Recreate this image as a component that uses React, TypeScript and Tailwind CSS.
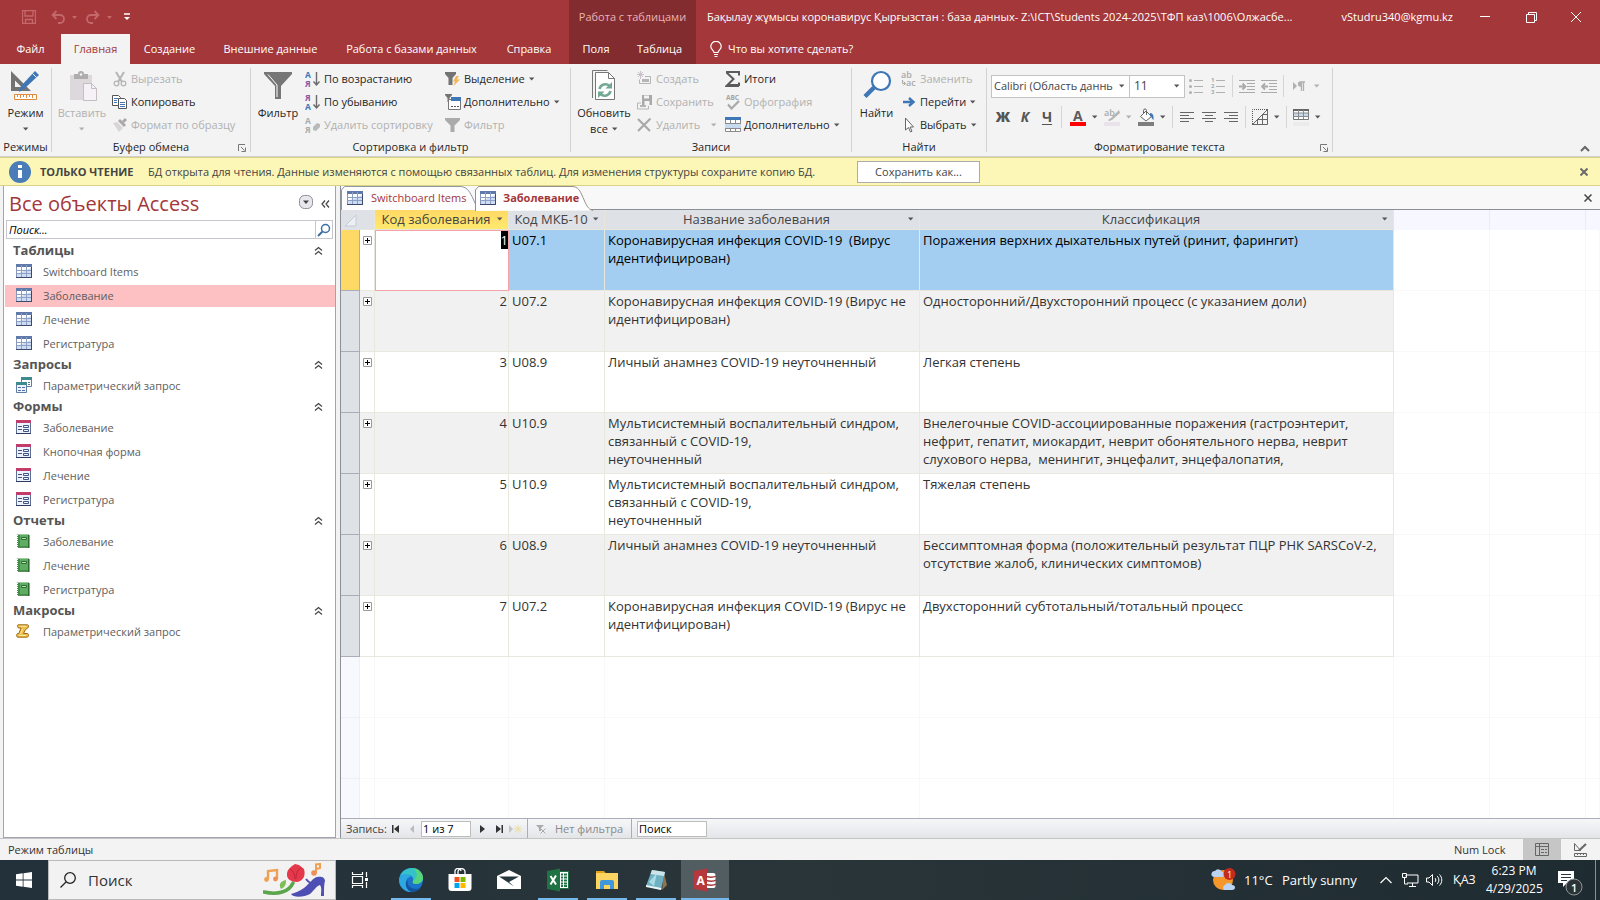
import type { ReactNode } from "react";

const GRAY = "#737373";
const LIGHT = "#b5b5b5";
const BLUE = "#3f76b5";

/* ---------- small shared pieces ---------- */

function Caret({ dim = false }: { dim?: boolean }) {
  return (
    <svg width="6" height="4" viewBox="0 0 6 4" className="shrink-0">
      <path d="M0 0.500h5.400L2.700 3.400z" fill={dim ? "#b0b0b0" : "#555"} />
    </svg>
  );
}

function Icon({ children, w = 16, h = 16 }: { children: ReactNode; w?: number; h?: number }) {
  return (
    <svg width={w} height={h} viewBox={`0 0 ${w} ${h}`} fill="none" className="shrink-0">
      {children}
    </svg>
  );
}

function SmallButton({ icon, text, disabled = false, caret = false, farCaret = false }: { icon: ReactNode; text: string; disabled?: boolean; caret?: boolean; farCaret?: boolean }) {
  return (
    <button disabled={disabled} className={`flex h-[23px] items-center gap-[3px] whitespace-nowrap ${disabled ? "text-[#b1b1b1]" : "text-[#262626]"}`}>
      {icon}
      <span>{text}</span>
      {caret && <span className={farCaret ? "pl-2" : "pl-px"}><Caret dim={disabled} /></span>}
    </button>
  );
}

function BigButton({ icon, lines, width, caret = "none", disabled = false }: { icon: ReactNode; lines: string[]; width: string; caret?: "none" | "below" | "inline"; disabled?: boolean }) {
  return (
    <button disabled={disabled} className={`flex flex-col items-center pt-[3px] leading-4 ${width} ${disabled ? "text-[#b1b1b1]" : "text-[#262626]"}`}>
      {icon}
      {lines.map((l, i) => (
        <span key={l} className={`flex items-center gap-1 whitespace-nowrap ${i === 0 ? "mt-[3px]" : ""}`}>
          {l}
          {caret === "inline" && i === lines.length - 1 && <Caret />}
        </span>
      ))}
      {caret === "below" && <span className="flex h-4 items-center"><Caret dim={disabled} /></span>}
    </button>
  );
}

function Launcher() {
  return (
    <Icon w={8} h={8}>
      <path d="M0.500 7V0.500H7M3 3l3.500 3.500M7.500 3.500v4h-4" stroke="#777" />
    </Icon>
  );
}

function Group({ label, width, launcher = false, children }: { label: string; width: string; launcher?: boolean; children: ReactNode }) {
  return (
    <>
      <section aria-label={label} className={`flex shrink-0 flex-col pt-[3px] ${width}`}>
        <div className="flex h-[69px] items-start">{children}</div>
        <div className="flex h-5 items-center text-[#262626]">
          <span className="flex-1 pt-0.5 text-center whitespace-nowrap">{label}</span>
          {launcher && <button aria-label={`${label}: параметры`} className="-ml-3 pt-1 pr-1"><Launcher /></button>}
        </div>
      </section>
      <div className="my-1 w-px shrink-0 bg-[#d2d2d2]" />
    </>
  );
}

/* ---------- ribbon icons ---------- */

const DesignIcon = () => (
  <Icon w={32} h={32}>
    <path d="M1 1v20h20L1 1zm4 9.500L11.500 17H5z" fill={GRAY} fillRule="evenodd" />
    <path d="M9 22l2-6L25 1l4 4-15 14z" fill={BLUE} />
    <path d="M22.500 3.500l4 4" stroke="#f3f3f3" />
    <path d="M4.500 24.500h22v5h-22z" fill="#fff" stroke="#e08a3c" />
    <path d="M7.500 25v2M10.500 25v3M13.500 25v2M16.500 25v3M19.500 25v2M22.500 25v3" stroke="#e08a3c" />
  </Icon>
);

const PasteIcon = () => (
  <Icon w={32} h={32}>
    <path d="M4 5h22v25H4z" fill="#dcd8dc" />
    <path d="M8 4h4a3 3 0 0 1 6 0h4v5H8z" fill="#adadad" />
    <circle cx="15" cy="4.500" r="1.300" fill="#f3f3f3" />
    <path d="M17.500 13.500h8l5 5v12h-13z" fill="#f6f1f6" stroke="#c4bdc4" />
    <path d="M25.500 13.500v5h5" stroke="#c4bdc4" />
  </Icon>
);

const CutIcon = () => (
  <Icon>
    <path d="M4 1l6 10M12 1L6 11" stroke={LIGHT} strokeWidth="2" />
    <circle cx="4.500" cy="12.500" r="2.300" stroke={LIGHT} strokeWidth="1.300" />
    <circle cx="11.500" cy="12.500" r="2.300" stroke={LIGHT} strokeWidth="1.300" />
  </Icon>
);

const CopyIcon = () => (
  <Icon>
    <path d="M0.500 1.500h6l2 2v8h-8z" fill="#fff" stroke="#555" />
    <path d="M2 4.500h4M2 6.500h3M2 8.500h3" stroke={BLUE} />
    <path d="M6.500 4.500h6l2 2v8h-8z" fill="#fff" stroke="#555" />
    <path d="M8 8.500h5M8 10.500h5M8 12.500h5" stroke={BLUE} />
  </Icon>
);

const BrushIcon = () => (
  <Icon>
    <path d="M1 6l4-1 6 6-4 4z" fill="#d8d4d8" />
    <path d="M6 4l2-2 6 6-2 2z" fill="#a8a8a8" />
    <path d="M10 4l3-3 2 2-3 3z" fill="#a8a8a8" />
  </Icon>
);

const FunnelBig = () => (
  <Icon w={32} h={32}>
    <path d="M2 2h28v2L19 16v13h-6V16L2 4z" fill="#767676" />
    <path d="M6 4.500l9 10.500v12" stroke="#fff" />
  </Icon>
);

function SortIcon({ a, b, ca, cb, muted = false }: { a: string; b: string; ca: string; cb: string; muted?: boolean }) {
  return (
    <Icon>
      <text x="0" y="7" fontSize="8.500" fontWeight="700" fontFamily="Open Sans, sans-serif" fill={ca}>{a}</text>
      <text x="0" y="15.500" fontSize="8.500" fontWeight="700" fontFamily="Open Sans, sans-serif" fill={cb}>{b}</text>
      {muted ? (
        <path d="M8 10l4-4 3 1v3l-4 4-3-1z" fill="#b9b9b9" />
      ) : (
        <path d="M11.500 1v13M8.500 10.500l3 3.500 3-3.500" stroke="#6a6a6a" strokeWidth="1.400" />
      )}
    </Icon>
  );
}

const SelectionIcon = () => (
  <Icon>
    <path d="M0 1h11v2L7.500 7v7h-4V7L0 3z" fill={GRAY} />
    <path d="M11 5h3l-2 3.500h3L8.500 15l1.500-4.500H8z" fill="#f3b65b" />
  </Icon>
);

const AdvancedIcon = () => (
  <Icon>
    <path d="M0 0h7v1L4.500 4v4h-2V4L0 1z" fill={GRAY} />
    <path d="M3.500 5.500h12v10h-12z" fill="#fff" stroke="#777" />
    <path d="M6 3h10v4H6z" fill={BLUE} />
    <path d="M6 12.500h2M9 12.500h2M12 12.500h2" stroke="#555" />
  </Icon>
);

const FunnelSmall = () => (
  <Icon>
    <path d="M0 1h15v2l-5.500 5.500V15h-4V8.500L0 3z" fill="#ababab" />
  </Icon>
);

const RefreshIcon = () => (
  <Icon w={32} h={32}>
    <path d="M4.500 28V0.500h15" stroke="#777" />
    <path d="M7.500 2.500h13l6 6v21h-19z" fill="#fff" stroke="#777" />
    <path d="M20.500 2.500v6h6" stroke="#777" />
    <path d="M11.500 19a6 6 0 0 1 10-3" stroke="#73a892" strokeWidth="2.600" />
    <path d="M24 12v6.500H17.500z" fill="#73a892" />
    <path d="M22.500 21a6 6 0 0 1-10 3" stroke="#73a892" strokeWidth="2.600" />
    <path d="M10 28v-6.500H16.500z" fill="#73a892" />
  </Icon>
);

const NewRecordIcon = () => (
  <Icon>
    <path d="M3.500 0v8M0 3.500h7M1 1l5 5M6 1L1 6" stroke="#c9c3c9" />
    <path d="M8 5.500h5.500v7h-11v-4" stroke={LIGHT} />
    <path d="M5 8h7v3H5z" fill="#b5b5b5" />
  </Icon>
);

const SaveRecordIcon = () => (
  <Icon>
    <path d="M5 1h10v10H5z" fill="#a9a9a9" />
    <path d="M7 1.500h5v3H7zM7.500 7h5v4h-5z" fill="#f3f3f3" />
    <path d="M4 9H0.500v6h11v-3" stroke={LIGHT} />
    <path d="M3 12h6" stroke={LIGHT} strokeWidth="2" />
  </Icon>
);

const DeleteIcon = () => (
  <Icon>
    <path d="M1 2l12 12M13.500 1.500L1 14" stroke="#a9a9a9" strokeWidth="2.200" />
  </Icon>
);

const SigmaIcon = () => (
  <Icon>
    <path d="M1 1h13v3.500M14 15H1.500l7-7L1.500 1.500M14 11.500V14H2" stroke="#5b5b5b" strokeWidth="2" />
  </Icon>
);

const SpellIcon = () => (
  <Icon>
    <text x="1" y="6" fontSize="6.500" fontWeight="700" fontFamily="Open Sans, sans-serif" fill="#a4a4a4">ABC</text>
    <path d="M3 10.500l3.500 4L14 7" stroke="#a9a9a9" strokeWidth="2.200" />
  </Icon>
);

const MoreIcon = () => (
  <Icon>
    <path d="M0.500 1.500h15v13h-15z" fill="#fff" stroke="#8a8a8a" />
    <path d="M0 0h16v3H0z" fill={BLUE} />
    <path d="M0 7h16v4H0z" fill="#c7daf0" />
    <path d="M0 6.500h16M0 11.500h16M5.500 3v4M10.500 3v4M5.500 11v4M10.500 11v4" stroke="#8a8a8a" />
  </Icon>
);

const FindIcon = () => (
  <Icon w={32} h={32}>
    <circle cx="20" cy="11" r="9" fill="#fff" stroke={BLUE} strokeWidth="2.200" />
    <path d="M13 17.500L4 26.500" stroke={BLUE} strokeWidth="4.500" />
  </Icon>
);

const ReplaceIcon = () => (
  <Icon>
    <text x="0" y="7" fontSize="9" fontWeight="600" fontFamily="Open Sans, sans-serif" fill="#a9a9a9">ab</text>
    <text x="5" y="14.500" fontSize="9" fontWeight="600" fontFamily="Open Sans, sans-serif" fill="#a9a9a9">ac</text>
    <path d="M1.500 9v3.500H4M2.500 10.500l2 2-2 2" stroke="#a9a9a9" />
  </Icon>
);

const GoToIcon = () => (
  <Icon>
    <path d="M2 8h9M8 4l4.500 4L8 12" stroke={BLUE} strokeWidth="2.400" />
  </Icon>
);

const PickIcon = () => (
  <Icon>
    <path d="M4.500 1v12l3-2.500 2 4.500 1.500-.8-2-4.200h3.500z" fill="#fff" stroke="#666" />
  </Icon>
);

const ListIcon = ({ numbered = false }: { numbered?: boolean }) => (
  <Icon>
    {[2.5, 8.5, 14.5].map((y, i) =>
      numbered ? (
        <text key={y} x="1" y={y + 1.5} fontSize="6" fontWeight="700" fontFamily="Open Sans, sans-serif" fill="#aaa">{i + 1}</text>
      ) : (
        <circle key={y} cx="2.500" cy={y} r="1.500" fill="#b0b0b0" />
      ),
    )}
    <path d="M6 2.500h9M6 8.500h9M6 14.500h9" stroke="#b0b0b0" />
  </Icon>
);

const IndentIcon = ({ out = false }: { out?: boolean }) => (
  <Icon>
    <path d="M0 2.500h16M8 5.500h8M8 8.500h8M8 11.500h8M0 14.500h16" stroke="#aaa" />
    <path d={out ? "M1 8.500h6M4 5.500l-3 3 3 3" : "M0 8.500h6M3.500 5.500l3 3-3 3"} stroke="#aaa" strokeWidth="1.800" />
  </Icon>
);

const AlignIcon = ({ d }: { d: string }) => (
  <Icon>
    <path d={d} stroke="#666" />
  </Icon>
);

const FontColorIcon = () => (
  <Icon w={16} h={18}>
    <text x="3" y="13" fontSize="14" fontWeight="700" fontFamily="Open Sans, sans-serif" fill="#5c5c5c">A</text>
    <path d="M0 14h16v4H0z" fill="#f00" />
  </Icon>
);

const HighlightIcon = () => (
  <Icon w={16} h={18}>
    <text x="0" y="8" fontSize="9" fontWeight="600" fontFamily="Open Sans, sans-serif" fill="#a9a9a9">ab</text>
    <path d="M15 2L7 10l-3 2 1 1 3-1 8-7z" fill="#b5b5b5" />
    <path d="M0 14h16v4H0z" fill="#e8e2ea" />
  </Icon>
);

const FillIcon = () => (
  <Icon w={16} h={18}>
    <path d="M2.500 8.500L8 3l5.500 5.500L8 13z" fill="#fff" stroke="#666" />
    <path d="M5.500 6V2.500a1.500 1.500 0 0 1 3 0V7" stroke="#666" />
    <path d="M12 5c3 0 4 3 3.500 7-1.500-.5-1.500-3-3.500-4z" fill={BLUE} />
    <path d="M0 14h16v4H0z" fill="#7d7d7d" />
  </Icon>
);

const GridlinesIcon = () => (
  <Icon>
    <path d="M0.500 15V0.500H15" stroke="#555" strokeDasharray="1 1" />
    <path d="M0 15.500h15.500V0M15 1L1 15M10.500 6v9.500M5.500 11v4.500M6 10.500h9.500M11 5.500h4.500" stroke="#666" />
  </Icon>
);

const AltRowsIcon = () => (
  <Icon w={16} h={18}>
    <path d="M0.500 1.500h15v10h-15z" fill="#fff" stroke="#777" />
    <path d="M0 1h16v2H0z" fill="#666" />
    <path d="M1 5h14v3H1z" fill="#c7daf0" />
    <path d="M0 5h16M0 8.500h16M5.500 2v9M10.500 2v9" stroke="#8a8a8a" />
    <path d="M0 14h16v4H0z" fill="#ebebeb" />
  </Icon>
);

const ParagraphIcon = () => (
  <Icon>
    <path d="M1 4l4 4-4 4z" fill="#b0b0b0" />
    <path d="M13 4H8.500a2 2 0 0 0 0 4H9M9.500 4v9M11.500 4v9" stroke="#b0b0b0" strokeWidth="1.300" />
    <path d="M9 4v4a2 2 0 0 1 0-4z" fill="#b0b0b0" />
  </Icon>
);

/* ---------- object icons ---------- */

const TableIcon = () => (
  <Icon w={16} h={14}>
    <path d="M0.500 0.500h15v12.500h-15z" fill="#fff" stroke="#8494b8" />
    <path d="M1 10l14-6v9H1z" fill="#cddbf3" />
    <path d="M0 0h16v3H0z" fill="#6079ab" />
    <path d="M0 6.500h16M0 9.500h16M5.500 1v12M10.500 1v12" stroke="#8c9fc4" />
    <path d="M0 13.500h16M15.500 3v11" stroke="#3b4a6b" />
  </Icon>
);

const QueryIcon = () => (
  <Icon>
    <path d="M5.500 0.500h10v9h-10z" fill="#fff" stroke="#5e7fa5" />
    <path d="M5 0h11v3H5z" fill="#3d8b8f" />
    <path d="M0.500 5.500h10v10h-10z" fill="#eef3fc" stroke="#5e7fa5" />
    <path d="M0 5h11v3H0z" fill="#3d8b8f" />
    <path d="M2 10.500h3M6 10.500h3M2 13.500h3M6 13.500h3M12 5.500h2M12 7.500h2" stroke="#5570a8" />
  </Icon>
);

const FormIcon = () => (
  <Icon w={16} h={14}>
    <path d="M0.500 0.500h14v13h-14z" fill="#edf2fd" stroke="#5d6f96" />
    <path d="M0 0h15v3H0z" fill="#c23d6c" />
    <path d="M2 6.500h4M2 9.500h4" stroke="#44557f" />
    <path d="M7.500 5.500h5v2h-5zM7.500 9.500h5v2h-5z" stroke="#44557f" />
    <path d="M0 13.500h15" stroke="#2e3c5d" />
  </Icon>
);

const ReportIcon = () => (
  <Icon w={16} h={14}>
    <path d="M1 0.500h12v13H1z" fill="#3f8f45" />
    <path d="M4 1h8v11H4z" fill="#5fad62" />
    <path d="M5.500 3.500h5v2h-5z" fill="#bfe0b8" stroke="#2d6b33" />
    <path d="M13 1v13H2" stroke="#1d4a24" />
    <path d="M1 1v13" stroke="#fff" strokeDasharray="1 1" strokeWidth="2" />
  </Icon>
);

const MacroIcon = () => (
  <Icon w={16} h={14}>
    <path d="M2 .8h9.500c1.200 0 1.300 2.400.3 3.200L9.500 5.500l-2 4h4c1.500 0 1.300 3.700-.5 3.700H1.800C.2 13.200.2 9.800 1.800 9.500h1L5 4H3C1.200 4 1 1.200 2 .8z" fill="#eebf4a" stroke="#9b6c14" />
    <path d="M3.500 2.300h7M6.500 5L4.500 10M3 11.500h7" stroke="#fbe9a8" />
  </Icon>
);

/* ---------- data ---------- */

type Kind = "table" | "query" | "form" | "report" | "macro";

const objectIcons: Record<Kind, ReactNode> = {
  table: <TableIcon />,
  query: <QueryIcon />,
  form: <FormIcon />,
  report: <ReportIcon />,
  macro: <MacroIcon />,
};

const navGroups: { title: string; kind: Kind; items: string[] }[] = [
  { title: "Таблицы", kind: "table", items: ["Switchboard Items", "Заболевание", "Лечение", "Регистратура"] },
  { title: "Запросы", kind: "query", items: ["Параметрический запрос"] },
  { title: "Формы", kind: "form", items: ["Заболевание", "Кнопочная форма", "Лечение", "Регистратура"] },
  { title: "Отчеты", kind: "report", items: ["Заболевание", "Лечение", "Регистратура"] },
  { title: "Макросы", kind: "macro", items: ["Параметрический запрос"] },
];

const rows = [
  { id: 1, code: "U07.1", name: ["Коронавирусная инфекция COVID-19  (Вирус", "идентифицирован)"], cls: ["Поражения верхних дыхательных путей (ринит, фарингит)"] },
  { id: 2, code: "U07.2", name: ["Коронавирусная инфекция COVID-19 (Вирус не", "идентифицирован)"], cls: ["Односторонний/Двухсторонний процесс (с указанием доли)"] },
  { id: 3, code: "U08.9", name: ["Личный анамнез COVID-19 неуточненный"], cls: ["Легкая степень"] },
  { id: 4, code: "U10.9", name: ["Мультисистемный воспалительный синдром,", "связанный с COVID-19,", "неуточненный"], cls: ["Внелегочные COVID-ассоциированные поражения (гастроэнтерит,", "нефрит, гепатит, миокардит, неврит обонятельного нерва, неврит", "слухового нерва,  менингит, энцефалит, энцефалопатия,"] },
  { id: 5, code: "U10.9", name: ["Мультисистемный воспалительный синдром,", "связанный с COVID-19,", "неуточненный"], cls: ["Тяжелая степень"] },
  { id: 6, code: "U08.9", name: ["Личный анамнез COVID-19 неуточненный"], cls: ["Бессимптомная форма (положительный результат ПЦР РНК SARSCoV-2,", "отсутствие жалоб, клинических симптомов)"] },
  { id: 7, code: "U07.2", name: ["Коронавирусная инфекция COVID-19 (Вирус не", "идентифицирован)"], cls: ["Двухсторонний субтотальный/тотальный процесс"] },
];

/* ---------- title bar and ribbon ---------- */

function Header() {
  return (
    <header className="flex h-16 shrink-0 bg-[#a4373a] text-white">
      <div className="flex w-[569px] shrink-0 flex-col">
        <div className="flex h-[34px] items-center pl-[22px]">
          <button aria-label="Сохранить">
            <Icon w={14} h={14}>
              <path d="M0.500 0.500h13v13h-13zM3 1v5h8V1M3.500 13V9.500h7V13" stroke="#c4686b" strokeWidth="1.300" />
            </Icon>
          </button>
          <button aria-label="Отменить" className="ml-[15px] flex items-center gap-[7px]">
            <Icon w={14} h={14}>
              <path d="M1.500 5H9a4 4 0 0 1 0 8H7M5.500 1l-4 4 4 4" stroke="#c4686b" strokeWidth="1.800" />
            </Icon>
            <svg width="5" height="3"><path d="M0 0h5L2.500 3z" fill="#c4686b" /></svg>
          </button>
          <button aria-label="Вернуть" className="ml-[9px] flex items-center gap-[7px]">
            <Icon w={14} h={14}>
              <path d="M12.500 5H5a4 4 0 0 0 0 8h2M8.500 1l4 4-4 4" stroke="#c4686b" strokeWidth="1.800" />
            </Icon>
            <svg width="5" height="3"><path d="M0 0h5L2.500 3z" fill="#c4686b" /></svg>
          </button>
          <button aria-label="Настройка панели" className="ml-3">
            <Icon w={6} h={8}>
              <path d="M0 1h6" stroke="#fff" strokeWidth="1.500" />
              <path d="M0 4h6L3 7z" fill="#fff" />
            </Icon>
          </button>
        </div>
        <nav className="flex h-[30px] items-center whitespace-nowrap">
          <button className="w-[61px] text-center">Файл</button>
          <button className="h-full w-[69px] bg-[#f3f3f3] text-center text-[#a4373a]">Главная</button>
          <button className="w-[79px] text-center">Создание</button>
          <button className="w-[123px] text-center">Внешние данные</button>
          <button className="w-[159px] text-center">Работа с базами данных</button>
          <button className="w-[76px] text-center">Справка</button>
        </nav>
      </div>
      <div className="flex w-[127px] shrink-0 flex-col bg-[#822c2f]">
        <div className="flex h-[34px] items-center justify-center whitespace-nowrap text-[#e9b3b4]">Работа с таблицами</div>
        <div className="flex h-[30px] items-center">
          <button className="w-[54px] text-center">Поля</button>
          <button className="flex-1 text-center">Таблица</button>
        </div>
      </div>
      <div className="flex min-w-0 flex-1 flex-col">
        <div className="flex h-[34px] items-center pl-[11px] whitespace-nowrap">
          <h1>Бақылау жұмысы коронавирус Қырғызстан : база данных- Z:\ICT\Students 2024-2025\ТФП каз\1006\Олжасбе...</h1>
          <span className="ml-auto">vStudru340@kgmu.kz</span>
          <div className="flex pl-1.5">
            <button aria-label="Свернуть" className="flex h-8 w-[52px] items-center justify-center">
              <Icon w={10} h={10}><path d="M0 4.500h10" stroke="#fff" /></Icon>
            </button>
            <button aria-label="Развернуть" className="flex h-8 w-10 items-center justify-center">
              <Icon w={11} h={11}><path d="M0.500 2.500h8v8h-8zM2.500 2V0.500h8v8H9" stroke="#fff" /></Icon>
            </button>
            <button aria-label="Закрыть" className="flex h-8 w-[49px] items-center justify-center">
              <Icon w={10} h={10}><path d="M0 0l10 10M10 0L0 10" stroke="#fff" /></Icon>
            </button>
          </div>
        </div>
        <button className="flex h-[30px] items-center gap-1.5 self-start pl-[14px]">
          <Icon w={12} h={16}>
            <path d="M4 11.500c0-2-3.200-3-3.200-6a5.200 5.200 0 0 1 10.400 0c0 3-3.200 4-3.200 6zM4 13.500h4M4.500 15.500h3" stroke="#fff" strokeWidth="1.200" />
          </Icon>
          Что вы хотите сделать?
        </button>
      </div>
    </header>
  );
}

const Sep = () => <div className="h-[22px] w-px shrink-0 bg-[#d5d5d5]" />;

function CaretButton({ icon, dim = false, label }: { icon: ReactNode; dim?: boolean; label: string }) {
  return (
    <button aria-label={label} disabled={dim} className="flex items-center gap-1.5">
      {icon}
      <Caret dim={dim} />
    </button>
  );
}

function TextFormatting() {
  return (
    <div className="flex flex-1 flex-col pl-1">
      <div className="flex h-[38px] items-center">
        <div className="relative h-[23px] w-[139px] border border-[#c3c3c3] bg-white">
          <select aria-label="Шрифт" className="h-full w-[122px] appearance-none overflow-hidden bg-transparent pl-0.5 text-[#444]">
            <option>Calibri (Область даннь</option>
          </select>
          <span className="pointer-events-none absolute top-2 right-1 flex"><Caret /></span>
        </div>
        <div className="relative h-[23px] w-[55px] border border-l-0 border-[#c3c3c3] bg-white">
          <select aria-label="Размер шрифта" className="h-full w-full appearance-none bg-transparent pl-1 text-[12px] text-[#444]">
            <option>11</option>
          </select>
          <span className="pointer-events-none absolute top-2 right-1 flex"><Caret /></span>
        </div>
        <div className="flex items-center pl-[3px]">
          <button aria-label="Маркеры" disabled><ListIcon /></button>
          <button aria-label="Нумерация" disabled className="ml-1.5"><ListIcon numbered /></button>
        </div>
        <div className="flex items-center gap-1.5 pl-1.5">
          <Sep />
          <button aria-label="Увеличить отступ" disabled><IndentIcon /></button>
          <button aria-label="Уменьшить отступ" disabled><IndentIcon out /></button>
          <Sep />
        </div>
        <div className="flex pl-2">
          <CaretButton label="Направление текста" dim icon={<ParagraphIcon />} />
        </div>
      </div>
      <div className="flex h-6 items-center text-[14px] text-[#555]">
        <button aria-label="Полужирный" className="w-[24px] text-center font-extrabold">Ж</button>
        <button aria-label="Курсив" className="w-[20px] text-center font-bold italic">К</button>
        <button aria-label="Подчеркнутый" className="w-[24px] text-center font-bold underline underline-offset-2">Ч</button>
        <div className="flex items-center gap-2 pl-0.5">
          <Sep />
          <CaretButton label="Цвет текста" icon={<FontColorIcon />} />
        </div>
        <div className="flex items-center gap-1.5 pl-1.5">
          <CaretButton label="Выделение цветом" dim icon={<HighlightIcon />} />
          <CaretButton label="Цвет фона" icon={<FillIcon />} />
        </div>
        <div className="flex items-center gap-1.5 pl-1.5">
          <Sep />
          <button aria-label="По левому краю"><AlignIcon d="M1 3.500h14M1 6.500h9M1 9.500h14M1 12.500h9" /></button>
          <button aria-label="По центру"><AlignIcon d="M1 3.500h14M4 6.500h8M1 9.500h14M4 12.500h8" /></button>
          <button aria-label="По правому краю"><AlignIcon d="M1 3.500h14M6 6.500h9M1 9.500h14M6 12.500h9" /></button>
          <Sep />
          <CaretButton label="Сетка" icon={<GridlinesIcon />} />
          <Sep />
          <CaretButton label="Чередование строк" icon={<AltRowsIcon />} />
        </div>
      </div>
    </div>
  );
}

function Ribbon() {
  return (
    <div className="flex h-[93px] shrink-0 border-b border-[#cfcfcf] bg-[#f3f3f3]">
      <Group label="Режимы" width="w-[51px]">
        <BigButton width="w-full" icon={<DesignIcon />} lines={["Режим"]} caret="below" />
      </Group>
      <Group label="Буфер обмена" width="w-[198px]" launcher>
        <BigButton width="w-[60px]" icon={<PasteIcon />} lines={["Вставить"]} caret="below" disabled />
        <div className="flex flex-col">
          <SmallButton icon={<CutIcon />} text="Вырезать" disabled />
          <SmallButton icon={<CopyIcon />} text="Копировать" />
          <SmallButton icon={<BrushIcon />} text="Формат по образцу" disabled />
        </div>
      </Group>
      <Group label="Сортировка и фильтр" width="w-[319px]">
        <BigButton width="w-[54px]" icon={<FunnelBig />} lines={["Фильтр"]} />
        <div className="flex w-[140px] flex-col">
          <SmallButton icon={<SortIcon a="А" b="Я" ca={BLUE} cb="#8b55a5" />} text="По возрастанию" />
          <SmallButton icon={<SortIcon a="Я" b="А" ca="#8b55a5" cb={BLUE} />} text="По убыванию" />
          <SmallButton icon={<SortIcon a="А" b="Я" ca="#ababab" cb="#ababab" muted />} text="Удалить сортировку" disabled />
        </div>
        <div className="flex flex-col">
          <SmallButton icon={<SelectionIcon />} text="Выделение" caret />
          <SmallButton icon={<AdvancedIcon />} text="Дополнительно" caret />
          <SmallButton icon={<FunnelSmall />} text="Фильтр" disabled />
        </div>
      </Group>
      <Group label="Записи" width="w-[280px]">
        <BigButton width="w-[66px]" icon={<RefreshIcon />} lines={["Обновить", "все"]} caret="inline" />
        <div className="flex w-[88px] flex-col">
          <SmallButton icon={<NewRecordIcon />} text="Создать" disabled />
          <SmallButton icon={<SaveRecordIcon />} text="Сохранить" disabled />
          <SmallButton icon={<DeleteIcon />} text="Удалить" disabled caret farCaret />
        </div>
        <div className="flex flex-col">
          <SmallButton icon={<SigmaIcon />} text="Итоги" />
          <SmallButton icon={<SpellIcon />} text="Орфография" disabled />
          <SmallButton icon={<MoreIcon />} text="Дополнительно" caret />
        </div>
      </Group>
      <Group label="Найти" width="w-[134px]">
        <BigButton width="w-[49px]" icon={<FindIcon />} lines={["Найти"]} />
        <div className="flex flex-col">
          <SmallButton icon={<ReplaceIcon />} text="Заменить" disabled />
          <SmallButton icon={<GoToIcon />} text="Перейти" caret />
          <SmallButton icon={<PickIcon />} text="Выбрать" caret />
        </div>
      </Group>
      <Group label="Форматирование текста" width="w-[345px]" launcher>
        <TextFormatting />
      </Group>
      <button aria-label="Свернуть ленту" className="mt-auto mr-2.5 mb-1 ml-auto">
        <Icon w={10} h={7}><path d="M1 6l4-4 4 4" stroke="#666" strokeWidth="2" /></Icon>
      </button>
    </div>
  );
}

/* ---------- message bar ---------- */

function MessageBar() {
  return (
    <div role="status" className="flex h-[29px] shrink-0 items-center border-y border-[#d9d387] bg-[#fcf7b6] pr-3 pl-[9px] whitespace-nowrap text-[#444]">
      <Icon w={22} h={22}>
        <circle cx="11" cy="11" r="11" fill="#4a7db8" />
        <path d="M9 9h4v8H9zM9 4h4v3H9z" fill="#fff" />
      </Icon>
      <strong className="w-[117px] shrink-0 pl-[9px]">ТОЛЬКО ЧТЕНИЕ</strong>
      <span className="w-[709px] shrink-0">БД открыта для чтения. Данные изменяются с помощью связанных таблиц. Для изменения структуры сохраните копию БД.</span>
      <button className="h-[22px] w-[123px] shrink-0 border border-[#ababab] bg-white">Сохранить как...</button>
      <button aria-label="Закрыть сообщение" className="ml-auto">
        <Icon w={8} h={8}><path d="M0.500 0.500l7 7M7.500 0.500l-7 7" stroke="#6b6b6b" strokeWidth="2" /></Icon>
      </button>
    </div>
  );
}

/* ---------- navigation pane ---------- */

function NavPane() {
  return (
    <aside className="ml-[3px] flex w-[333px] shrink-0 flex-col border border-t-0 border-[#a3a3b0] bg-white">
      <div className="flex h-[34px] items-center pt-0.5 pl-[5px]">
        <h2 className="flex-1 text-[20px] whitespace-nowrap text-[#a4373a]">Все объекты Access</h2>
        <button aria-label="Категории" className="mb-1">
          <Icon w={14} h={14}>
            <rect x="0.500" y="0.500" width="13" height="13" rx="5" fill="#e8e8ec" stroke="#8d8d9a" />
            <path d="M4 5.500h6L7 9z" fill="#444" />
          </Icon>
        </button>
        <button aria-label="Свернуть область" className="mr-[5px] ml-2">
          <Icon w={9} h={8}><path d="M4 0.500L1 4l3 3.500M8 0.500L5 4l3 3.500" stroke="#444" strokeWidth="1.200" /></Icon>
        </button>
      </div>
      <div className="mx-0.5 mb-[2px] flex h-[19px] shrink-0 border border-[#c6c6cc]">
        <input aria-label="Поиск по объектам" placeholder="Поиск..." className="min-w-0 flex-1 px-0.5 text-[11px] italic outline-none placeholder:text-black" />
        <button aria-label="Найти объект" className="flex w-[17px] items-center justify-center border-l border-[#c6c6cc]">
          <Icon w={14} h={14}>
            <circle cx="8.500" cy="5.500" r="4" stroke="#3c6ea5" strokeWidth="1.500" />
            <path d="M5.500 8.500L1 13" stroke="#3c6ea5" strokeWidth="2" />
          </Icon>
        </button>
      </div>
      {navGroups.map((g) => (
        <section key={g.title} className="flex flex-col">
          <button className="flex h-[18px] items-center justify-between pr-3 pl-[9px] text-[13px] font-bold text-[#555]">
            {g.title}
            <Icon w={9} h={9}><path d="M1 4.500l3.500-3 3.500 3M1 8.500l3.500-3 3.500 3" stroke="#444" strokeWidth="1.200" /></Icon>
          </button>
          {g.items.map((item) => (
            <a
              key={item}
              href="#"
              className={`mt-0.5 ml-px flex h-[22px] items-center gap-2.5 pl-[11px] text-[11px] text-[#5e5e5e] ${g.kind === "table" && item === "Заболевание" ? "bg-[#fdc1c3]" : ""}`}
            >
              <span className="flex w-[17px] pb-0.5">{objectIcons[g.kind]}</span>
              {item}
            </a>
          ))}
        </section>
      ))}
    </aside>
  );
}

/* ---------- datasheet ---------- */

function DocumentTabs() {
  return (
    <div className="flex h-6 shrink-0 border-b border-[#8b8f98] bg-[#f8f8f8] text-[#a4373a]">
      <button className="relative flex w-[142px] shrink-0 items-center gap-2 pl-1.5 text-[11px] whitespace-nowrap">
        <svg width="142" height="24" className="absolute top-0 left-0" fill="#fdfdfd"><path d="M0.500 24V4l3-3.500H119c6 0 9 4 12 10s5 13 10 13.500" stroke="#9196a0" /></svg>
        <span className="relative flex"><TableIcon /></span>
        <span className="relative">Switchboard Items</span>
      </button>
      <button className="relative -ml-2 flex w-[116px] shrink-0 items-center gap-[7px] pl-[5px] text-[11px] font-bold whitespace-nowrap">
        <svg width="122" height="25" className="absolute top-0 left-0" fill="#fff"><path d="M0.500 25V4l3-3.500H97c6 0 8 4 11 11s5 12 10 13" stroke="#9a8f88" /></svg>
        <span className="relative flex"><TableIcon /></span>
        <span className="relative">Заболевание</span>
      </button>
      <button aria-label="Закрыть вкладку" className="mr-2 ml-auto">
        <Icon w={8} h={8}><path d="M0.500 0.500l7 7M7.500 0.500l-7 7" stroke="#444" strokeWidth="1.500" /></Icon>
      </button>
    </div>
  );
}

function ColumnHead({ title, active = false }: { title: string; active?: boolean }) {
  return (
    <th className={`border-r border-b border-[#e8e6da] p-0 align-top font-normal ${active ? "bg-linear-to-b from-[#ffd965] to-[#ffe96e]" : "bg-[#dee1e6]"}`}>
      <div className="flex items-center pr-[5px]">
        <span className="flex-1 text-center">{title}</span>
        <button aria-label={`Фильтр: ${title}`} className="flex"><Caret /></button>
      </div>
    </th>
  );
}

function Datasheet() {
  const line = "border-r border-b border-[#e9e8dc]";
  const faint = "border-r border-b border-[#f8f8f8]";
  return (
    <div className="min-h-0 flex-1 overflow-hidden bg-white">
      <table className="w-full table-fixed border-separate border-spacing-0 text-[13px] leading-[18px] whitespace-pre text-[#333]">
        <colgroup>
          <col className="w-[19px]" />
          <col className="w-[15px]" />
          <col className="w-[134px]" />
          <col className="w-[96px]" />
          <col className="w-[315px]" />
          <col className="w-[474px]" />
          <col className="w-[96px]" />
          <col className="w-[96px]" />
          <col />
        </colgroup>
        <thead>
          <tr className="h-5 text-[#444]">
            <th aria-label="Выделить все" className="bg-[#dee1e6] p-0">
              <svg width="18" height="18" className="block"><path d="M15 4v11H4z" fill="#eceff4" stroke="#c3cbd8" /></svg>
            </th>
            <td className="border-r border-b border-[#e8e6da] bg-[#dee1e6] p-0" />
            <ColumnHead title="Код заболевания" active />
            <ColumnHead title="Код МКБ-10" />
            <ColumnHead title="Название заболевания" />
            <ColumnHead title="Классификация" />
            <td className="border-r border-[#ebebf3] bg-[#f6f7ff] p-0" />
            <td className="border-r border-[#ebebf3] bg-[#f6f7ff] p-0" />
            <td className="bg-[#f6f7ff] p-0" />
          </tr>
        </thead>
        <tbody>
          {rows.map((r) => {
            const current = r.id === 1;
            const bg = current ? "bg-[#a3cef1] text-black" : r.id % 2 === 0 ? "bg-[#f1f1f1]" : "bg-white";
            return (
              <tr key={r.id} className="h-[61px] align-top">
                <th aria-label={`Запись ${r.id}`} className={`border-r border-b border-[#a9adb8] p-0 ${current ? "bg-[#ffd965]" : "bg-[#dee1e6]"}`} />
                <td className={`p-0 ${line} ${current ? "bg-white" : bg}`}>
                  <button aria-label="Развернуть запись" className="mt-1.5 ml-[3px] block">
                    <Icon w={9} h={9}>
                      <path d="M0.500 0.500h8v8h-8z" fill="#fff" stroke="#9a9a9a" />
                      <path d="M2 4.500h5M4.500 2v5" stroke="#000" />
                    </Icon>
                  </button>
                </td>
                <td className={`p-0 text-right ${current ? "border border-[#f5a3a7] bg-white" : `pt-px pr-px ${line} ${bg}`}`}>
                  <span className={current ? "inline-block bg-black text-white" : ""}>{r.id}</span>
                </td>
                <td className={`p-0 pt-px pl-[3px] ${line} ${bg}`}>{r.code}</td>
                <td className={`p-0 pt-px pl-[3px] ${line} ${bg}`}>{r.name.join("\n")}</td>
                <td className={`p-0 pt-px pl-[3px] ${line} ${bg}`}>{r.cls.join("\n")}</td>
                <td className={faint} />
                <td className={faint} />
                <td className={faint} />
              </tr>
            );
          })}
          {[8, 9, 10].map((n) => (
            <tr key={n} className="h-[61px]">
              <td className="border-r border-b border-[#efeff6] bg-[#f8f9ff]" />
              {[1, 2, 3, 4, 5, 6, 7, 8].map((c) => (
                <td key={c} className={faint} />
              ))}
            </tr>
          ))}
        </tbody>
      </table>
    </div>
  );
}

function RecordBar() {
  return (
    <div className="flex h-5 shrink-0 items-center border-t border-[#a9adb8] bg-linear-to-b from-[#f6f7f9] to-[#e3e5e9] pl-[5px] whitespace-nowrap text-[#444]">
      <span className="w-[46px] text-[11px]">Запись:</span>
      <button aria-label="Первая запись"><Icon w={7} h={8}><path d="M0 0h1.500v8H0zM7 0v8L2 4z" fill="#333" /></Icon></button>
      <button aria-label="Предыдущая запись" className="ml-[10px]"><Icon w={6} h={8}><path d="M5 0v8L1 4z" fill="#bbb" /></Icon></button>
      <input aria-label="Текущая запись" defaultValue="1 из 7" className="ml-1.5 h-4 w-[50px] border border-[#bdbdbd] bg-white px-px text-[11px] text-black outline-none" />
      <button aria-label="Следующая запись" className="ml-[9px]"><Icon w={6} h={8}><path d="M0 0v8l5-4z" fill="#333" /></Icon></button>
      <button aria-label="Последняя запись" className="ml-[10px]"><Icon w={7} h={8}><path d="M0 0v8l5-4zM5.500 0H7v8H5.500z" fill="#333" /></Icon></button>
      <button aria-label="Новая запись" className="ml-1.5">
        <Icon w={13} h={8}>
          <path d="M0 0v8l4-4z" fill="#c4c4c4" />
          <path d="M9 0v8M5 4h8M6 1l6 6M12 1L6 7" stroke="#ecdfa4" />
        </Icon>
      </button>
      <div className="ml-[5px] h-full w-px bg-[#a9adb8]" />
      <button disabled className="flex w-[103px] items-center gap-[9px] pl-[8px] text-[11px] text-[#8a8a8a]">
        <Icon w={10} h={10}><path d="M0 1h8L5 4v3H3V4z" fill="#aaa" /><path d="M4.500 4.500l5 5M9.500 4.500l-5 5" stroke="#aaa" /></Icon>
        Нет фильтра
      </button>
      <div className="h-full w-px bg-[#a9adb8]" />
      <input aria-label="Поиск по записям" defaultValue="Поиск" className="ml-[5px] h-4 w-[70px] border border-[#bdbdbd] bg-white px-px text-[11px] text-black outline-none" />
    </div>
  );
}

/* ---------- status bar and taskbar ---------- */

function StatusBar() {
  return (
    <footer className="flex h-[22px] shrink-0 items-center border-t border-[#c4c4c4] bg-[#f3f3f3] pl-2 text-[11px] text-[#333]">
      <span>Режим таблицы</span>
      <span className="ml-auto w-[69px]">Num Lock</span>
      <button aria-label="Режим таблицы" className="flex h-full w-[38px] items-center justify-center bg-[#c6c6c6]">
        <Icon w={14} h={13}><path d="M0.500 0.500h13v12h-13zM0.500 3.500h13M4.500 0.500v12M6 6.500h3M10 6.500h2M6 9.500h3M10 9.500h2" stroke="#666" /></Icon>
      </button>
      <button aria-label="Конструктор" className="flex h-full w-[39px] items-center justify-center">
        <Icon w={15} h={14}>
          <path d="M1.500 0.500v7h6zM1.500 10.500h12v3h-12zM4.500 11v1M7.500 11v1M10.500 11v1" stroke="#666" />
          <path d="M6 7.500L13 1" stroke="#666" strokeWidth="2" />
        </Icon>
      </button>
    </footer>
  );
}

const taskApps: { name: string; bar: string; active?: boolean; icon: ReactNode }[] = [
  {
    name: "Edge",
    bar: "w-10",
    icon: (
      <Icon w={24} h={24}>
        <circle cx="12" cy="12" r="12" fill="#1b74c9" />
        <path d="M1 8C4 1 10 0 13 0c7 0 11 5 11 10 0 4-4 6-7 6-3 0-4-1-3-3 1-3-1-6-5-6-3 0-6 0-8 1z" fill="#35c3c8" />
        <path d="M14 0c6 1 10 5 10 10 0 4-4 6-7 6-3 0-4-1-3-3 4-3 6-8 0-13z" fill="#5fd96a" opacity="0.800" />
        <path d="M0 12C0 5 9 4 12 9c-4 0-6 4-5 8 1 3 3 6 7 6.800C6 25 0 19 0 12z" fill="#2ea8e0" />
        <path d="M9 12c-2 5 3 9 8 9 2 0 4-1 5-2-2 4-6 5-10 4.800C7 22 5 15 9 12z" fill="#14549f" />
      </Icon>
    ),
  },
  {
    name: "Microsoft Store",
    bar: "",
    icon: (
      <Icon w={24} h={24}>
        <path d="M7 7V4a3 3 0 0 1 6-1M10 7V4a3.500 3.500 0 0 1 7 0v3" stroke="#fff" strokeWidth="1.300" />
        <path d="M0.500 6h23v14a3 3 0 0 1-3 3h-17a3 3 0 0 1-3-3z" fill="#fff" />
        <path d="M6.500 9h5v5h-5z" fill="#f25022" />
        <path d="M12.500 9h5v5h-5z" fill="#7fba00" />
        <path d="M6.500 15h5v5h-5z" fill="#00a4ef" />
        <path d="M12.500 15h5v5h-5z" fill="#ffb900" />
      </Icon>
    ),
  },
  {
    name: "Почта",
    bar: "",
    icon: (
      <Icon w={24} h={24}>
        <path d="M0 8l12-6 12 6v13H0z" fill="#fff" />
        <path d="M2 8.500h20L12 14l5 4.500z" fill="#26343c" />
      </Icon>
    ),
  },
  {
    name: "Excel",
    bar: "w-10",
    icon: (
      <Icon w={24} h={24}>
        <path d="M13 3.500h9.500v17H13z" fill="#fff" stroke="#1f7244" />
        <path d="M15 6.500h2M18 6.500h3M15 9.500h2M18 9.500h3M15 12.500h2M18 12.500h3M15 15.500h2M18 15.500h3M15 18h2M18 18h3" stroke="#1f7244" strokeWidth="2" />
        <path d="M1 3l13-2.500v23L1 21z" fill="#1f7244" />
        <path d="M4.500 8l5.500 8.500M10 7.500l-5.500 9" stroke="#fff" strokeWidth="2" />
      </Icon>
    ),
  },
  {
    name: "Проводник",
    bar: "w-10",
    icon: (
      <Icon w={24} h={24}>
        <path d="M1 3h8l2 2.500h-10z" fill="#e0a21b" />
        <path d="M1 5h22v16H1z" fill="#fcd462" />
        <path d="M5 21v-7a2 2 0 0 1 2-2h10a2 2 0 0 1 2 2v7h-4v-4H9v4z" fill="#3f97dc" />
      </Icon>
    ),
  },
  {
    name: "Блокнот",
    bar: "w-10",
    icon: (
      <Icon w={24} h={24}>
        <path d="M20 5l3 12-5 5z" fill="#8f7350" />
        <path d="M8 2l13 2-4 18-15-4z" fill="#6fb0c2" />
        <path d="M8 2l13 2-1 4L6.500 6z" fill="#cde5ea" />
        <path d="M2 17l15.500 3-.5 2-15-3z" fill="#eaf5f7" />
        <path d="M5 14L13 5l-3 13z" fill="#a9dbe6" />
      </Icon>
    ),
  },
  {
    name: "Access",
    bar: "w-12",
    active: true,
    icon: (
      <Icon w={24} h={24}>
        <path d="M13 5h7c2 0 2.500 1 2.500 2v11c0 1.500-1 2-2.500 2h-7z" fill="#fff" />
        <path d="M13 8.500c4 1 8 1 10-.5M13 12.500c4 1 8 1 10-.5M13 16.500c4 1 8 1 10-.5" stroke="#a4373a" strokeWidth="1.300" />
        <path d="M1 3l13-2.500v23L1 21z" fill="#b5383c" />
        <text x="3.500" y="16.500" fontSize="12" fontWeight="700" fontFamily="Open Sans, sans-serif" fill="#fff">A</text>
      </Icon>
    ),
  },
];

const SearchArt = () => (
  <Icon w={64} h={34}>
    <path d="M5 16V8l9-1v9" stroke="#f0a052" strokeWidth="2.400" />
    <circle cx="3.500" cy="16.500" r="2.400" fill="#f0a052" />
    <circle cx="12.500" cy="16" r="2.400" fill="#ee8f58" />
    <path d="M53 10V1.500l4-.5v4l-3 1" stroke="#f0a052" strokeWidth="2" />
    <circle cx="51" cy="10" r="2.800" fill="#ee8f58" />
    <path d="M30 20C26 29 15 32 1 29" stroke="#5ba64b" strokeWidth="3.500" strokeLinecap="round" />
    <path d="M18 26c-3-5 0-8 5-9 0 5-1 7-5 9z" fill="#7dbe56" />
    <path d="M24 12c0-5 2-6 5-9l3-2 4 1 5 4c2 7-1 12-7 13-6 0-10-3-10-7z" fill="#e5394b" />
    <path d="M27 6c3 2 5 5 5 10M38 5c-4 2-5 6-5 11" stroke="#c22539" />
    <path d="M28 31c4-1 9-3 13-6 5-4 9-10 13-11 4-1 8 0 8 4-1 3-1 9-1 15h-3c0-5 1-8-1-11-5 2-6 6-10 9-5 3-17 4-19 0z" fill="#4d4fb5" />
    <path d="M43 16c3 4 6 6 12 4" stroke="#4d4fb5" strokeWidth="2" />
  </Icon>
);

function Taskbar() {
  return (
    <div className="flex h-10 shrink-0 bg-linear-to-r from-[#22313a] via-[#293539] to-[#1e2b31] text-white">
      <button aria-label="Пуск" className="flex w-12 shrink-0 items-center justify-center">
        <Icon w={16} h={16}><path d="M0 2.300l6.700-1v6.300H0zM7.500 1.200L16 0v7.600H7.500zM0 8.400h6.700v6.300L0 13.700zM7.500 8.400H16V16l-8.500-1.200z" fill="#fff" /></Icon>
      </button>
      <label className="flex w-[288px] shrink-0 items-center border border-[#b9b9b9] bg-[#f2f2f2] pr-2 pl-[11px]">
        <Icon w={16} h={16}>
          <circle cx="10" cy="6" r="5.300" stroke="#222" strokeWidth="1.300" />
          <path d="M6 10L0.500 15.500" stroke="#222" strokeWidth="1.300" />
        </Icon>
        <input aria-label="Поиск в Windows" placeholder="Поиск" className="min-w-0 flex-1 bg-transparent pl-3 text-[15px] outline-none placeholder:text-[#333]" />
        <SearchArt />
      </label>
      <button aria-label="Представление задач" className="flex w-[47px] shrink-0 items-center justify-center">
        <Icon w={18} h={18}>
          <path d="M1.500 1v2.500h10V1M1.500 17v-2.500h10V17M1.500 5.500h10v7h-10zM15.500 1v5M15.500 11v6" stroke="#fff" strokeWidth="1.200" />
          <path d="M14 7h3v3h-3z" fill="#fff" />
        </Icon>
      </button>
      <div className="flex gap-px pl-1">
        {taskApps.map((a) => (
          <button key={a.name} aria-label={a.name} className={`flex w-12 flex-col items-center justify-between pt-2 ${a.active ? "bg-[#525d61]" : ""}`}>
            {a.icon}
            <span className={`h-0.5 bg-[#76b9ed] ${a.bar}`} />
          </button>
        ))}
      </div>
      <div className="ml-auto flex shrink-0 items-center text-[13px] whitespace-nowrap">
        <button className="flex items-center">
          <Icon w={26} h={24}>
            <circle cx="12" cy="12" r="10" fill="#f5972a" />
            <path d="M3 9a3 3 0 0 1 1-6 4 4 0 0 1 7 1c3 0 3 5 0 5z" fill="#bcd4f3" />
            <path d="M13 22a3 3 0 0 1 1-5 4 4 0 0 1 7 0c4 0 4 5 0 5z" fill="#bcd4f3" />
            <circle cx="18.500" cy="6" r="6" fill="#c42b1c" />
            <text x="16" y="9.500" fontSize="9" fontFamily="Open Sans, sans-serif" fill="#fff">1</text>
          </Icon>
          <span className="w-[45px] pl-[7px] text-left">11°C</span>
          <span className="w-[98px] text-left">Partly sunny</span>
        </button>
        <button aria-label="Скрытые значки" className="flex w-[22px]"><Icon w={12} h={8}><path d="M0.500 7L6 1.500 11.500 7" stroke="#fff" strokeWidth="1.200" /></Icon></button>
        <button aria-label="Сеть" className="flex w-6">
          <Icon w={17} h={14}><path d="M4 3.500V2h12v8H5M10.500 10v3M7 13.500h7M0.500 0.500h4v4h-4zM2.500 5v6H6" stroke="#fff" /></Icon>
        </button>
        <button aria-label="Громкость" className="flex w-[27px]">
          <Icon w={17} h={14}><path d="M0.500 5h2.500l3.500-3.500v11L3 9H0.500zM9 5c1 1 1 3 0 4M11 3c2.500 2 2.500 6 0 8M13.500 1.500c3 3 3 8 0 11" stroke="#fff" /></Icon>
        </button>
        <button className="w-[33px] text-left text-[12px]">ҚАЗ</button>
        <button className="w-[56px] text-center text-[12px] leading-[18px]">6:23 PM<br />4/29/2025</button>
        <button aria-label="Уведомления" className="mr-3 ml-4 pt-1.5">
          <Icon w={25} h={25}>
            <path d="M0 0h16v12H9l-4 4v-4H0z" fill="#fff" />
            <path d="M3 3.500h10M3 6.500h10M3 9.500h6" stroke="#26343c" />
            <circle cx="16" cy="16" r="8" fill="#2c3336" stroke="#8f9699" />
            <text x="13" y="20.500" fontSize="11" fontWeight="600" fontFamily="Open Sans, sans-serif" fill="#fff">1</text>
          </Icon>
        </button>
        <div className="mr-1 h-10 w-px bg-[#8a9296]" />
      </div>
    </div>
  );
}

export default function App() {
  return (
    <div className="flex h-screen w-full flex-col overflow-hidden bg-[#f3f3f3] font-['Open_Sans','Noto_Sans',sans-serif] text-[11px] leading-4">
      <Header />
      <Ribbon />
      <MessageBar />
      <main className="flex min-h-0 flex-1">
        <NavPane />
        <div className="ml-1 flex min-w-0 flex-1 flex-col border-l border-[#8b8f98]">
          <DocumentTabs />
          <Datasheet />
          <RecordBar />
        </div>
      </main>
      <StatusBar />
      <Taskbar />
    </div>
  );
}
